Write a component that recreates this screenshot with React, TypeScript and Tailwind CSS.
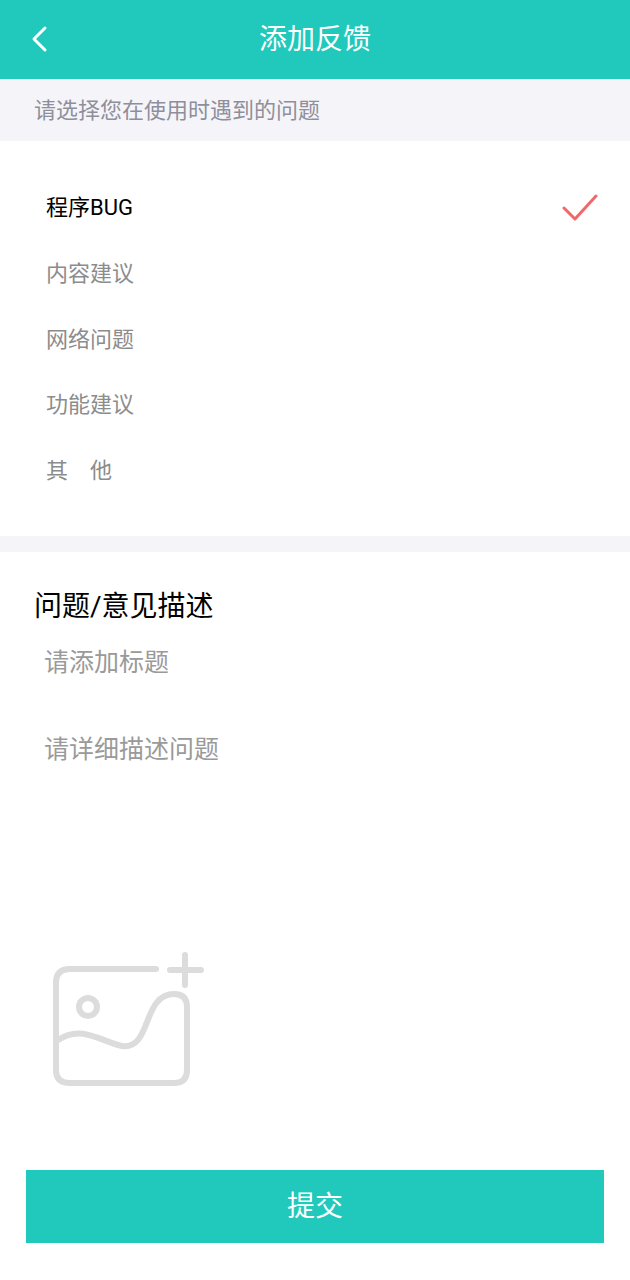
import React from "react";

const OPTIONS = [
  { label: "程序BUG", active: true },
  { label: "内容建议" },
  { label: "网络问题" },
  { label: "功能建议" },
  { label: "其　他" },
];

const FONT = "font-['Roboto','Noto_Sans_CJK_SC',sans-serif]";

export default function App() {
  return (
    <div className={`${FONT} w-[630px] h-[1280px] bg-white flex flex-col`}>
      <header className="h-[79px] shrink-0 bg-[#20c9bb] flex items-center justify-center relative">
        <svg className="absolute left-[29px] top-[25px]" width="20" height="28" viewBox="0 0 20 28" fill="none">
          <path d="M16 3 L5 14 L16 25" stroke="#fff" strokeWidth="3" strokeLinecap="round" strokeLinejoin="round" />
        </svg>
        <h1 className="text-[28px] leading-none text-white">添加反馈</h1>
      </header>

      <div className="h-[62px] shrink-0 bg-[#f5f5f9] flex items-center pl-[34px] text-[22px] text-[#8f8f9c]">
        请选择您在使用时遇到的问题
      </div>

      <ul className="shrink-0 h-[395px] pt-[34px] pl-[46px] pr-[32px]">
        {OPTIONS.map((o) => (
          <li key={o.label} className="h-[65.7px] flex items-center justify-between">
            <span className={`text-[22px] ${o.active ? "text-black" : "text-[#8c8c8c]"}`}>{o.label}</span>
            {o.active && (
              <svg width="36" height="30" viewBox="0 0 36 30" fill="none">
                <path d="M2 15 L13 26 L34 3" stroke="#f0686c" strokeWidth="3" strokeLinecap="round" strokeLinejoin="round" />
              </svg>
            )}
          </li>
        ))}
      </ul>

      <div className="h-[16px] shrink-0 bg-[#f5f5f9]" />

      <section className="flex-1 flex flex-col pl-[34px]">
        <h2 className="mt-[37px] text-[28px] leading-[36px] text-black">问题/意见描述</h2>
        <p className="mt-[20px] ml-[10px] text-[25px] leading-[36px] text-[#9a9a9a]">请添加标题</p>
        <p className="mt-[51px] ml-[10px] text-[25px] leading-[36px] text-[#9a9a9a]">请详细描述问题</p>
        <svg className="mt-[184px] ml-[18px]" width="152" height="134" viewBox="0 0 152 134" fill="none" stroke="#dcdcdc" strokeWidth="6" strokeLinecap="round" strokeLinejoin="round">
          <path d="M104 17 H18 Q4 17 4 31 V118 Q4 131 18 131 H122 Q135 131 135 118 V55 Q135 42 122 42 C90 42 100 98 70 94 C50 90 30 72 6 88" />
          <circle cx="36" cy="55" r="9" />
          <path d="M133 3 V33 M118 18 H149" />
        </svg>
      </section>

      <div className="shrink-0 px-[26px] pb-[37px]">
        <button className="w-full h-[73px] bg-[#20c9bb] text-white text-[28px]">提交</button>
      </div>
    </div>
  );
}
